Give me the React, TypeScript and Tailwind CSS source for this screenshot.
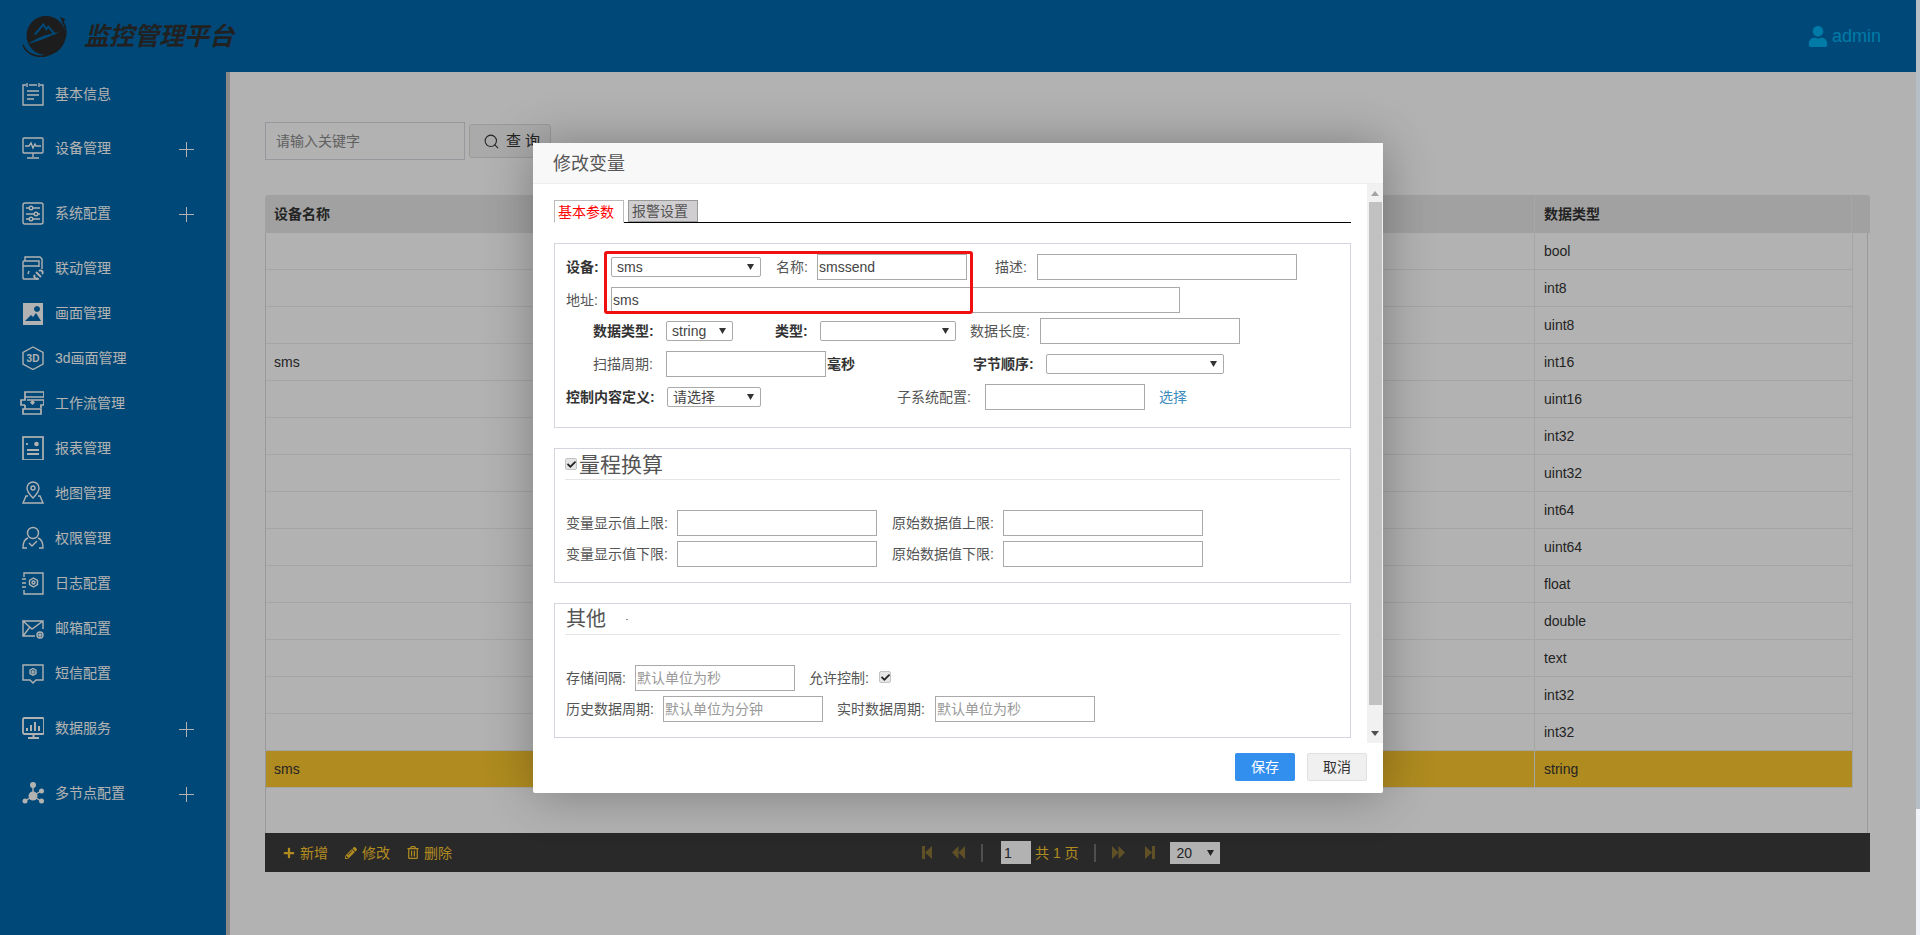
import type { ReactNode } from 'react'
import { FaUser, FaPlus, FaPencilAlt, FaRegTrashAlt, FaCheck } from 'react-icons/fa'
import { Search } from 'lucide-react'

type NavItem = { label: string; icon: ReactNode; tall?: boolean; short?: boolean }

function Ico({ children }: { children: ReactNode }) {
  return (
    <svg viewBox="0 0 24 24" className="w-[24px] h-[24px] shrink-0" fill="none" stroke="currentColor" strokeWidth="1.4">
      {children}
    </svg>
  )
}

const navItems: NavItem[] = [
  {
    label: '基本信息',
    short: true,
    icon: (
      <Ico>
        <path d="M6 3H3v20h20V3h-3M9 3h8M7 1v4M19 1v4" />
        <path d="M7 9h12M7 13h12M7 17h7" strokeWidth="1.6" />
      </Ico>
    ),
  },
  {
    label: '设备管理',
    tall: true,
    icon: (
      <Ico>
        <rect x="3" y="2" width="20" height="15" rx="1" />
        <path d="M5 10h4l2-3 2 5 2-4 1 2h5M13 17v4M7 22h12" />
      </Ico>
    ),
  },
  {
    label: '系统配置',
    tall: true,
    icon: (
      <Ico>
        <rect x="3" y="2" width="20" height="21" rx="2" />
        <path d="M6 7h3M13 7h7M6 13h8M18 13h2M6 18h3M13 18h7" />
        <circle cx="11" cy="7" r="1.8" />
        <circle cx="16" cy="13" r="1.8" />
        <circle cx="11" cy="18" r="1.8" />
      </Ico>
    ),
  },
  {
    label: '联动管理',
    icon: (
      <Ico>
        <path d="M5 5V1h15l2 2v10M19 23H4a1 1 0 0 1-1-1V6a1 1 0 0 1 1-1h15v6" />
        <path d="M3 10h16M9 15l-1 3" />
        <path d="M16 16l5 5M19 15a2 2 0 0 1 3 3M15 19a2 2 0 0 0 3 3" strokeWidth="1.8" />
      </Ico>
    ),
  },
  {
    label: '画面管理',
    icon: (
      <Ico>
        <path fill="currentColor" stroke="none" fillRule="evenodd" d="M3 2h20v22H3zM5 20h16l-5-8-3 4-2-2zM17 5a3 3 0 1 0 .01 0z" />
      </Ico>
    ),
  },
  {
    label: '3d画面管理',
    icon: (
      <Ico>
        <path d="M13 1l10 5.500v11.500l-10 5.500-10-5.500v-11.500z" />
        <text x="13" y="16" textAnchor="middle" fontSize="10" fontWeight="700" fill="currentColor" stroke="none" fontFamily="Liberation Sans">3D</text>
      </Ico>
    ),
  },
  {
    label: '工作流管理',
    icon: (
      <Ico>
        <path d="M5 1h19v5H5zM5 6v3H1v5h4M7 9h17v5h-3v3M5 14v4M3 18h18v5H3z" strokeWidth="1.7" />
        <path d="M12.500 9l2.500 2.500-2.500 2.500-2.500-2.500z" fill="currentColor" stroke="none" />
      </Ico>
    ),
  },
  {
    label: '报表管理',
    icon: (
      <Ico>
        <rect x="3" y="1" width="20" height="23" strokeWidth="1.7" />
        <circle cx="16.500" cy="8" r="2.300" fill="currentColor" stroke="none" />
        <path d="M7 7v2M7 14h12M7 18h12" strokeWidth="1.8" />
      </Ico>
    ),
  },
  {
    label: '地图管理',
    icon: (
      <Ico>
        <path d="M13 17c-4-4-6-6.500-6-10a6 6 0 0 1 12 0c0 3.500-2 6-6 10z" />
        <circle cx="13" cy="7" r="2" />
        <path d="M8 15H6l-3 7h20l-3-7h-2" />
      </Ico>
    ),
  },
  {
    label: '权限管理',
    icon: (
      <Ico>
        <circle cx="13" cy="7" r="5.500" />
        <path d="M8 12c-3 1-5 4-5 10h4M18 12c3 1 5 4 5 10h-4M9 17l3 3 5-5" />
      </Ico>
    ),
  },
  {
    label: '日志配置',
    icon: (
      <Ico>
        <path d="M4 6V2h19v21H4v-4M2 8h4M2 12h4M2 16h4" />
        <path d="M13.500 7l4 2.300v4.400l-4 2.300-4-2.300V9.300z" />
        <circle cx="13.500" cy="11.500" r="1.500" />
      </Ico>
    ),
  },
  {
    label: '邮箱配置',
    icon: (
      <Ico>
        <path d="M3 5h20v8M15 20H3V5l9 8 11-8M3 20l7-9" />
        <circle cx="20" cy="19" r="3" />
        <circle cx="20" cy="19" r="1" />
      </Ico>
    ),
  },
  {
    label: '短信配置',
    icon: (
      <Ico>
        <path d="M3 4h20v15h-7l-3 3-3-3H3z" />
        <path d="M13 7.500l3 1.700v3.300l-3 1.700-3-1.700V9.200z" />
        <circle cx="13" cy="11" r="1" />
      </Ico>
    ),
  },
  {
    label: '数据服务',
    tall: true,
    icon: (
      <Ico>
        <rect x="3" y="2" width="21" height="16" rx="1.500" strokeWidth="1.800" />
        <path d="M7 15v-3M11 15V9M15 15V6M19 15v-5" strokeWidth="2" />
        <path d="M13.500 18v3M8 22h11" strokeWidth="2" />
      </Ico>
    ),
  },
  {
    label: '多节点配置',
    tall: true,
    icon: (
      <Ico>
        <g fill="currentColor" stroke="none">
          <circle cx="13" cy="4" r="3" />
          <circle cx="13" cy="15" r="4.500" />
          <circle cx="21.500" cy="10" r="2.500" />
          <circle cx="5" cy="20" r="2.500" />
          <circle cx="21.500" cy="20" r="2.500" />
        </g>
        <path d="M13 4v8M13 15l8-5M13 15l-8 5M13 15l8 5" />
      </Ico>
    ),
  },
]

const rows = ['bool', 'int8', 'uint8', 'int16', 'uint16', 'int32', 'uint32', 'int64', 'uint64', 'float', 'double', 'text', 'int32', 'int32', 'string']

function Arrow() {
  return (
    <svg viewBox="0 0 7 6" className="w-[7px] h-[6px] shrink-0">
      <path d="M0 0h7L3.500 6z" fill="#333" />
    </svg>
  )
}

function Sel({ className, value }: { className: string; value?: string }) {
  return (
    <div className={`flex items-center justify-between h-[20px] bg-white border border-[#aaa] rounded-[2px] pl-[5px] pr-[6px] text-[#444] ${className}`}>
      <span>{value}</span>
      <Arrow />
    </div>
  )
}

function Field({ className, value, placeholder }: { className: string; value?: string; placeholder?: string }) {
  return (
    <input
      readOnly
      defaultValue={value}
      placeholder={placeholder}
      className={`h-[26px] bg-white border border-[#aaa] px-[1px] text-sm text-[#444] outline-none placeholder:text-[#999] ${className}`}
    />
  )
}

function Check({ className }: { className?: string }) {
  return (
    <div className={`flex items-center justify-center w-[12px] h-[12px] rounded-[2px] bg-[#e6e6e6] border border-[#c4c4c4] ${className ?? ''}`}>
      <FaCheck className="text-[9px] text-[#222]" />
    </div>
  )
}

function PagerIcon({ d, w }: { d: string; w: number }) {
  return (
    <svg viewBox={`0 0 ${w} 13`} width={w} height={13} className="shrink-0 opacity-40">
      <path d={d} fill="#fbc72e" />
    </svg>
  )
}

export default function App() {
  return (
    <div className="flex w-[1920px] h-[935px] overflow-hidden text-sm text-[#333] font-['Liberation_Sans','Noto_Sans_CJK_SC',sans-serif]">
      <div className="relative flex flex-col w-[1916px] h-full bg-white">
        <header className="flex items-center justify-between h-[72px] shrink-0 bg-[#0068ab] pl-[22px] pr-[35px]">
          <div className="flex items-center">
            <svg viewBox="0 0 48 44" className="w-[48px] h-[44px]">
              <circle cx="24" cy="21.500" r="19.500" fill="#2a2a2a" />
              <path d="M1 31c4 11 19 15 31 7 11-7 15-20 9-30" fill="none" stroke="#2a2a2a" strokeWidth="1.600" />
              <path d="M38 3l5 2-2 5z" fill="#2a2a2a" />
              <path d="M6 30c8-6 19-10 31-12-9 5-20 9-31 12z" fill="#0068ab" />
              <path d="M13 20.500l8.300-10 3 4.700 2-2.500 6.700 7.800" fill="none" stroke="#0068ab" strokeWidth="2" />
            </svg>
            <span className="ml-[14px] text-[25px] leading-none italic font-bold text-[#303030]">监控管理平台</span>
          </div>
          <div className="flex items-center text-[#00b0f0]">
            <FaUser className="w-[20px] h-[21px]" />
            <span className="ml-[4px] text-[18px] leading-none">admin</span>
          </div>
        </header>

        <div className="flex flex-1 min-h-0">
          <nav className="w-[230px] shrink-0 bg-[#0068ab] border-r-4 border-[#c5c5c5] text-white">
            {navItems.map(item => (
              <div
                key={item.label}
                className={`flex items-center pl-[20px] pr-[32px] ${item.tall ? 'h-[65px]' : item.short ? 'h-[43px]' : 'h-[45px]'}`}
              >
                {item.icon}
                <span className="ml-[11px] flex-1">{item.label}</span>
                {item.tall && (
                  <svg viewBox="0 0 15 15" className="w-[15px] h-[15px] mt-[3px]">
                    <path d="M0 7.500h15M7.500 0v15" stroke="currentColor" strokeWidth="1" />
                  </svg>
                )}
              </div>
            ))}
          </nav>

          <main className="flex-1 pl-[35px] pt-[50px]">
            <div className="flex items-center">
              <input
                readOnly
                placeholder="请输入关键字"
                className="w-[200px] h-[38px] border border-[#d9d9e3] px-[10px] text-sm outline-none placeholder:text-[#8a8a8a]"
              />
              <div className="flex items-center w-[82px] h-[34px] ml-[4px] pl-[13px] rounded-[3px] bg-[#f4f4f4] border border-[#ddd] text-[#333]">
                <Search size={17} strokeWidth={1.5} />
                <span className="ml-[6px] text-[15px] tracking-[4px]">查询</span>
              </div>
            </div>

            <div className="flex flex-col w-[1605px] h-[677px] mt-[35px]">
              <div className="flex h-[38px] shrink-0 rounded-t-[3px] bg-[#e7e7e7] font-bold">
                <div className="flex items-center w-[1269px] pl-[9px]">设备名称</div>
                <div className="flex items-center w-[318px] pl-[9px] border-x border-[#f0f0f0]">数据类型</div>
              </div>
              <div className="flex-1 w-[1603px] border-x border-[#dcdcdc]">
                {rows.map((type, i) => (
                  <div
                    key={i}
                    className={`flex w-[1587px] h-[37px] border-b border-[#ececec] ${i === 14 ? 'bg-[#fbc72e]' : ''}`}
                  >
                    <div className="flex items-center w-[1268px] pl-[8px]">{i === 3 || i === 14 ? 'sms' : ''}</div>
                    <div className="flex items-center w-[319px] pl-[9px] border-x border-[#ececec]">{type}</div>
                  </div>
                ))}
              </div>
              <div className="flex items-center h-[39px] shrink-0 bg-[#3c3c3c] pl-[18px] text-[#fbc72e]">
                <FaPlus className="w-[12px] h-[12px]" />
                <span className="ml-[5px]">新增</span>
                <FaPencilAlt className="w-[12px] h-[12px] ml-[17px]" />
                <span className="ml-[5px]">修改</span>
                <FaRegTrashAlt className="w-[12px] h-[13px] ml-[17px]" />
                <span className="ml-[5px]">删除</span>

                <div className="flex items-center ml-[470px]">
                  <PagerIcon w={10} d="M0 0h3v13H0zM10 0v13L3 6.500z" />
                  <div className="ml-[20px]"><PagerIcon w={13} d="M6.500 0v13L0 6.500zM13 0v13L6.500 6.500z" /></div>
                  <div className="w-[2px] h-[18px] ml-[16px] bg-[#717171]" />
                  <div className="flex items-center w-[30px] h-[23px] ml-[18px] pl-[3px] bg-white text-[#333]">1</div>
                  <span className="ml-[4px] whitespace-pre">共 1 页</span>
                  <div className="w-[2px] h-[18px] ml-[15px] bg-[#717171]" />
                  <div className="ml-[16px]"><PagerIcon w={13} d="M0 0v13l6.500-6.500zM6.500 0v13L13 6.500z" /></div>
                  <div className="ml-[20px]"><PagerIcon w={10} d="M7 0h3v13H7zM0 0v13l7-6.500z" /></div>
                  <div className="flex items-center justify-between w-[50px] h-[22px] ml-[15px] pl-[7px] pr-[6px] bg-white text-[#333]">
                    20
                    <Arrow />
                  </div>
                </div>
              </div>
            </div>
          </main>
        </div>

        <div className="absolute inset-0 bg-black/30" />

        <div className="absolute left-[533px] top-[143px] flex flex-col w-[850px] h-[650px] rounded-[2px] bg-white shadow-[1px_1px_50px_rgba(0,0,0,0.3)]">
          <div className="flex items-center h-[41px] shrink-0 pl-[20px] pt-[3px] bg-[#f8f8f8] border-b border-[#eee] text-[18px] text-[#555]">修改变量</div>

          <div className="flex h-[559px] shrink-0 overflow-hidden">
            <div className="w-[834px] pl-[21px] pr-[16px] pt-[16px]">
              <div className="flex h-[23px] border-b border-black">
                <div className="flex items-center w-[70px] h-[23px] pl-[3px] bg-white border border-[#bbb] border-b-white text-[#ff0000]">基本参数</div>
                <div className="flex items-center w-[70px] h-[22px] ml-[4px] pl-[3px] bg-[#d0ced0] border border-[#999] text-[#555]">报警设置</div>
              </div>

              <div className="relative h-[185px] mt-[20px] pl-[11px] pt-[10px] border border-[#d5d5df] text-[#555]">
                <div className="flex items-center h-[26px]">
                  <span className="w-[45px] font-bold text-[#333]">设备:</span>
                  <Sel className="w-[150px]" value="sms" />
                  <span className="w-[41px] ml-[15px]">名称:</span>
                  <Field className="w-[150px]" value="smssend" />
                  <span className="w-[42px] ml-[28px]">描述:</span>
                  <Field className="w-[260px]" />
                </div>
                <div className="flex items-center h-[26px] mt-[7px]">
                  <span className="w-[45px]">地址:</span>
                  <Field className="w-[569px]" value="sms" />
                </div>
                <div className="flex items-center h-[26px] mt-[5px]">
                  <span className="w-[73px] ml-[27px] font-bold text-[#333]">数据类型:</span>
                  <Sel className="w-[67px]" value="string" />
                  <span className="w-[45px] ml-[42px] font-bold text-[#333]">类型:</span>
                  <Sel className="w-[136px]" />
                  <span className="w-[70px] ml-[14px]">数据长度:</span>
                  <Field className="w-[200px]" />
                </div>
                <div className="flex items-center h-[26px] mt-[7px]">
                  <span className="w-[73px] ml-[27px]">扫描周期:</span>
                  <Field className="w-[160px]" />
                  <span className="w-[28px] ml-[1px] font-bold text-[#333]">毫秒</span>
                  <span className="w-[73px] ml-[118px] font-bold text-[#333]">字节顺序:</span>
                  <Sel className="w-[178px]" />
                </div>
                <div className="flex items-center h-[26px] mt-[7px]">
                  <span className="w-[101px] font-bold text-[#333]">控制内容定义:</span>
                  <Sel className="w-[94px]" value="请选择" />
                  <span className="w-[88px] ml-[136px]">子系统配置:</span>
                  <Field className="w-[160px]" />
                  <span className="ml-[14px] text-[#3c8dbc]">选择</span>
                </div>
                <div className="absolute left-[49px] top-[7px] w-[369px] h-[63px] rounded-[3px] border-[3px] border-[#f01010]" />
              </div>

              <div className="h-[135px] mt-[20px] px-[10px] border border-[#d5d5df] text-[#555]">
                <div className="flex items-center h-[31px] border-b border-[#e5e5e5]">
                  <Check />
                  <span className="ml-[2px] text-[21px] leading-none">量程换算</span>
                </div>
                <div className="flex items-center h-[26px] mt-[30px] ml-px">
                  <span className="w-[111px]">变量显示值上限:</span>
                  <Field className="w-[200px]" />
                  <span className="w-[111px] ml-[15px]">原始数据值上限:</span>
                  <Field className="w-[200px]" />
                </div>
                <div className="flex items-center h-[26px] mt-[5px] ml-px">
                  <span className="w-[111px]">变量显示值下限:</span>
                  <Field className="w-[200px]" />
                  <span className="w-[111px] ml-[15px]">原始数据值下限:</span>
                  <Field className="w-[200px]" />
                </div>
              </div>

              <div className="h-[135px] mt-[20px] px-[10px] border border-[#d5d5df] text-[#555]">
                <div className="flex items-center h-[31px] pl-px border-b border-[#e5e5e5]">
                  <span className="text-[20px] leading-none">其他</span>
                  <span className="w-[2px] h-px ml-[20px] bg-[#888]" />
                </div>
                <div className="flex items-center h-[26px] mt-[30px] ml-px">
                  <span className="w-[69px]">存储间隔:</span>
                  <Field className="w-[160px]" placeholder="默认单位为秒" />
                  <span className="w-[70px] ml-[14px]">允许控制:</span>
                  <Check className="-mt-[2px]" />
                </div>
                <div className="flex items-center h-[26px] mt-[5px] ml-px">
                  <span className="w-[97px]">历史数据周期:</span>
                  <Field className="w-[160px]" placeholder="默认单位为分钟" />
                  <span className="w-[98px] ml-[14px]">实时数据周期:</span>
                  <Field className="w-[160px]" placeholder="默认单位为秒" />
                </div>
              </div>
            </div>

            <div className="flex flex-col items-center w-[16px] shrink-0 bg-[#f1f1f1]">
              <svg viewBox="0 0 8 5" className="w-[8px] h-[5px] mt-[7px]">
                <path d="M0 5h8L4 0z" fill="#a3a3a3" />
              </svg>
              <div className="w-[13px] flex-1 mt-[6px] mb-[26px] bg-[#c1c1c1]" />
              <svg viewBox="0 0 8 5" className="w-[8px] h-[5px] mb-[7px]">
                <path d="M0 0h8L4 5z" fill="#505050" />
              </svg>
            </div>
          </div>

          <div className="flex justify-end gap-[12px] flex-1 pr-[16px] pt-[10px]">
            <div className="flex items-center justify-center w-[60px] h-[28px] rounded-[2px] bg-[#338fed] text-white">保存</div>
            <div className="flex items-center justify-center w-[60px] h-[28px] rounded-[2px] bg-[#f0f0f0] border border-[#e0e0e0] text-[#333]">取消</div>
          </div>
        </div>
      </div>

      <div className="flex flex-col w-[4px] shrink-0">
        <div className="h-[809px] bg-[#b5bfc5]" />
        <div className="flex-1 bg-[#f0f4f8]" />
      </div>
    </div>
  )
}
